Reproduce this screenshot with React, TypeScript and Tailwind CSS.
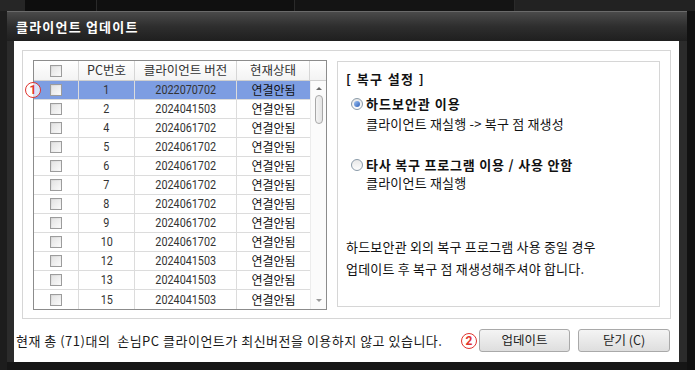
import React from "react";

const rows: [string, string][] = [
  ["1", "2022070702"],
  ["2", "2024041503"],
  ["4", "2024061702"],
  ["5", "2024061702"],
  ["6", "2024061702"],
  ["7", "2024061702"],
  ["8", "2024061702"],
  ["9", "2024061702"],
  ["10", "2024061702"],
  ["12", "2024041503"],
  ["13", "2024041503"],
  ["15", "2024041503"],
];

function Check() {
  return (
    <div className="w-[12px] h-[12px] border border-[#9c9c9c] bg-gradient-to-br from-[#d6d6d6] to-[#fbfbfb] p-[1px]">
      <div className="w-full h-full bg-gradient-to-br from-[#e4e4e4] to-[#f8f8f8]" />
    </div>
  );
}

function Digits({ children }: { children: React.ReactNode }) {
  return (
    <span className="inline-block scale-x-[0.9] font-['Roboto',sans-serif] text-[12px] text-[#333]">
      {children}
    </span>
  );
}

function Radio({ on }: { on: boolean }) {
  return (
    <div className="w-[12px] h-[12px] shrink-0 rounded-full border border-[#8a9aa8] bg-gradient-to-b from-[#e8e8e8] to-[#fdfdfd] flex items-center justify-center">
      {on && <div className="w-[6px] h-[6px] rounded-full bg-gradient-to-br from-[#9fc3f2] to-[#2f5fb8]" />}
    </div>
  );
}

function Badge({ n }: { n: string }) {
  return (
    <div className="w-[16px] h-[16px] rounded-full border-[1.5px] border-[#e0342e] bg-white/70 flex items-center justify-center text-[#e0342e] text-[12px] font-bold leading-none font-['Roboto',sans-serif]">
      {n}
    </div>
  );
}

export default function App() {
  return (
    <div className="w-[695px] h-[370px] bg-[#161616] overflow-hidden font-['Noto_Sans_CJK_KR',sans-serif] relative">
      {/* top strip */}
      <div className="h-[11px] flex">
        <div className="w-[29px] bg-[#262626]" />
        <div className="w-[84px] bg-[#0e0e0e] border-r border-[#2a2a2a]" />
        <div className="w-[232px] bg-[#101010] border-r border-[#2a2a2a]" />
        <div className="w-[257px] bg-[#141414] border-r border-[#2a2a2a]" />
        <div className="w-[210px] bg-[#222]" />
        <div className="flex-1 bg-[#0e0e0e]" />
      </div>
      <div className="flex">
        <div className="w-[7px] h-[359px] bg-[#1d1d1d]" />
        <div className="w-[680px] flex flex-col">
          {/* title bar */}
          <div className="h-[30px] bg-gradient-to-b from-[#4a4a4a] via-[#2e2e2e] to-[#1f1f1f] border-t border-[#6a6a6a] flex items-center pl-[9px]">
            <span className="text-white text-[13px] font-bold tracking-[1.2px]">클라이언트 업데이트</span>
          </div>
          {/* body */}
          <div className="flex bg-[#2b2b2b] h-[321px]">
            <div className="w-[7px]" />
            <div className="w-[665px] bg-white flex flex-col">
              {/* inner frame */}
              <div className="mt-[9px] mx-[8px] h-[269px] border border-[#d6d6d6] flex items-start pl-[10px] pt-[9px] gap-[10px] relative">
                {/* table */}
                <div className="w-[294px] h-[250px] border border-[#8c8c8c] flex flex-col bg-white">
                  <div className="h-[21px] flex border-b border-[#cfcfcf] bg-gradient-to-b from-white to-[#f3f3f3] text-[12.5px] text-[#333]">
                    <div className="w-[45px] flex items-center justify-center border-r border-[#d6d6d6]"><Check /></div>
                    <div className="w-[56px] flex items-center justify-center border-r border-[#d6d6d6]">PC번호</div>
                    <div className="w-[102px] flex items-center justify-center border-r border-[#d6d6d6]">클라이언트 버전</div>
                    <div className="w-[73px] flex items-center justify-center border-r border-[#d6d6d6]">현재상태</div>
                    <div className="flex-1" />
                  </div>
                  <div className="flex flex-1">
                    <div className="w-[276px] flex flex-col">
                      {rows.map(([n, v], i) => (
                        <div
                          key={n}
                          className={`h-[19px] flex ${i < rows.length - 1 ? "border-b border-[#dcdcdc]" : ""} ${i === 0 ? "bg-[#7d9de2]" : ""}`}
                        >
                          <div className="w-[45px] flex items-center justify-center border-r border-[#dcdcdc]"><Check /></div>
                          <div className="w-[56px] flex items-center justify-center border-r border-[#dcdcdc]"><Digits>{n}</Digits></div>
                          <div className="w-[102px] flex items-center justify-center border-r border-[#dcdcdc]"><Digits>{v}</Digits></div>
                          <div className="w-[73px] flex items-center justify-center text-[12px] text-[#111]">연결안됨</div>
                        </div>
                      ))}
                    </div>
                    {/* scrollbar */}
                    <div className="w-[16px] bg-[#fbfbfb] border-l border-[#ececec] flex flex-col items-center">
                      <div className="mt-[6px] w-0 h-0 border-l-[3px] border-r-[3px] border-b-[3px] border-l-transparent border-r-transparent border-b-[#6a6a6a]" />
                      <div className="mt-[5px] w-[8px] h-[29px] rounded-[4px] border border-[#a8a8a8] bg-gradient-to-r from-[#f4f4f4] to-[#e4e4e4]" />
                      <div className="flex-1" />
                      <div className="mb-[7px] w-0 h-0 border-l-[3px] border-r-[3px] border-t-[3px] border-l-transparent border-r-transparent border-t-[#9a9a9a]" />
                    </div>
                  </div>
                </div>
                {/* right panel */}
                <div className="mt-[1px] w-[323px] h-[246px] border border-[#d6d6d6] flex flex-col pl-[8px] pt-[9px] text-[#111]">
                  <div className="h-[16px] leading-[16px] text-[13px] font-bold tracking-[1.4px]">[ 복구 설정 ]</div>
                  <div className="mt-[9px] h-[16px] flex items-center gap-[3px] pl-[5px]">
                    <Radio on />
                    <div className="text-[13px] font-bold leading-[16px] h-[16px] tracking-[1px]">하드보안관 이용</div>
                  </div>
                  <div className="mt-[4px] h-[16px] leading-[16px] pl-[20px] text-[13px] tracking-[0.2px]">클라이언트 재실행 -&gt; 복구 점 재생성</div>
                  <div className="mt-[25px] h-[15px] flex items-center gap-[3px] pl-[5px]">
                    <Radio on={false} />
                    <div className="text-[13px] font-bold leading-[15px] h-[15px] tracking-[0.8px]">타사 복구 프로그램 이용 / 사용 안함</div>
                  </div>
                  <div className="mt-[3px] h-[15px] leading-[15px] pl-[20px] text-[13px] tracking-[0.2px]">클라이언트 재실행</div>
                  <div className="mt-[46px] leading-[22px] text-[13px] tracking-[0.2px]">
                    <div>하드보안관 외의 복구 프로그램 사용 중일 경우</div>
                    <div>업데이트 후 복구 점 재생성해주셔야 합니다.</div>
                  </div>
                </div>
                <div className="absolute left-[2px] top-[31px]">
                  <Badge n="1" />
                </div>
              </div>
              {/* bottom bar */}
              <div className="flex items-center h-[43px] pl-[2px] pr-[9px] relative">
                <span className="text-[13px] tracking-[0.5px] text-[#1a1a1a] whitespace-pre">현재 총 (71)대의  손님PC 클라이언트가 최신버전을 이용하지 않고 있습니다.</span>
                <div className="flex-1" />
                <div className="mr-[2px]"><Badge n="2" /></div>
                <div className="flex gap-[8px]">
                  <button className="w-[91px] h-[23px] rounded-[3px] border border-[#a9a9a9] bg-gradient-to-b from-[#f4f4f4] to-[#dedede] text-[12.5px] text-[#222]">업데이트</button>
                  <button className="w-[92px] h-[23px] rounded-[3px] border border-[#a9a9a9] bg-gradient-to-b from-[#f4f4f4] to-[#dedede] text-[12.5px] text-[#222]">닫기 (C)</button>
                </div>
              </div>
            </div>
            <div className="w-[8px] bg-[#2b2b2b]" />
          </div>
        </div>
        <div className="flex-1 bg-[#111]" />
      </div>
    </div>
  );
}
